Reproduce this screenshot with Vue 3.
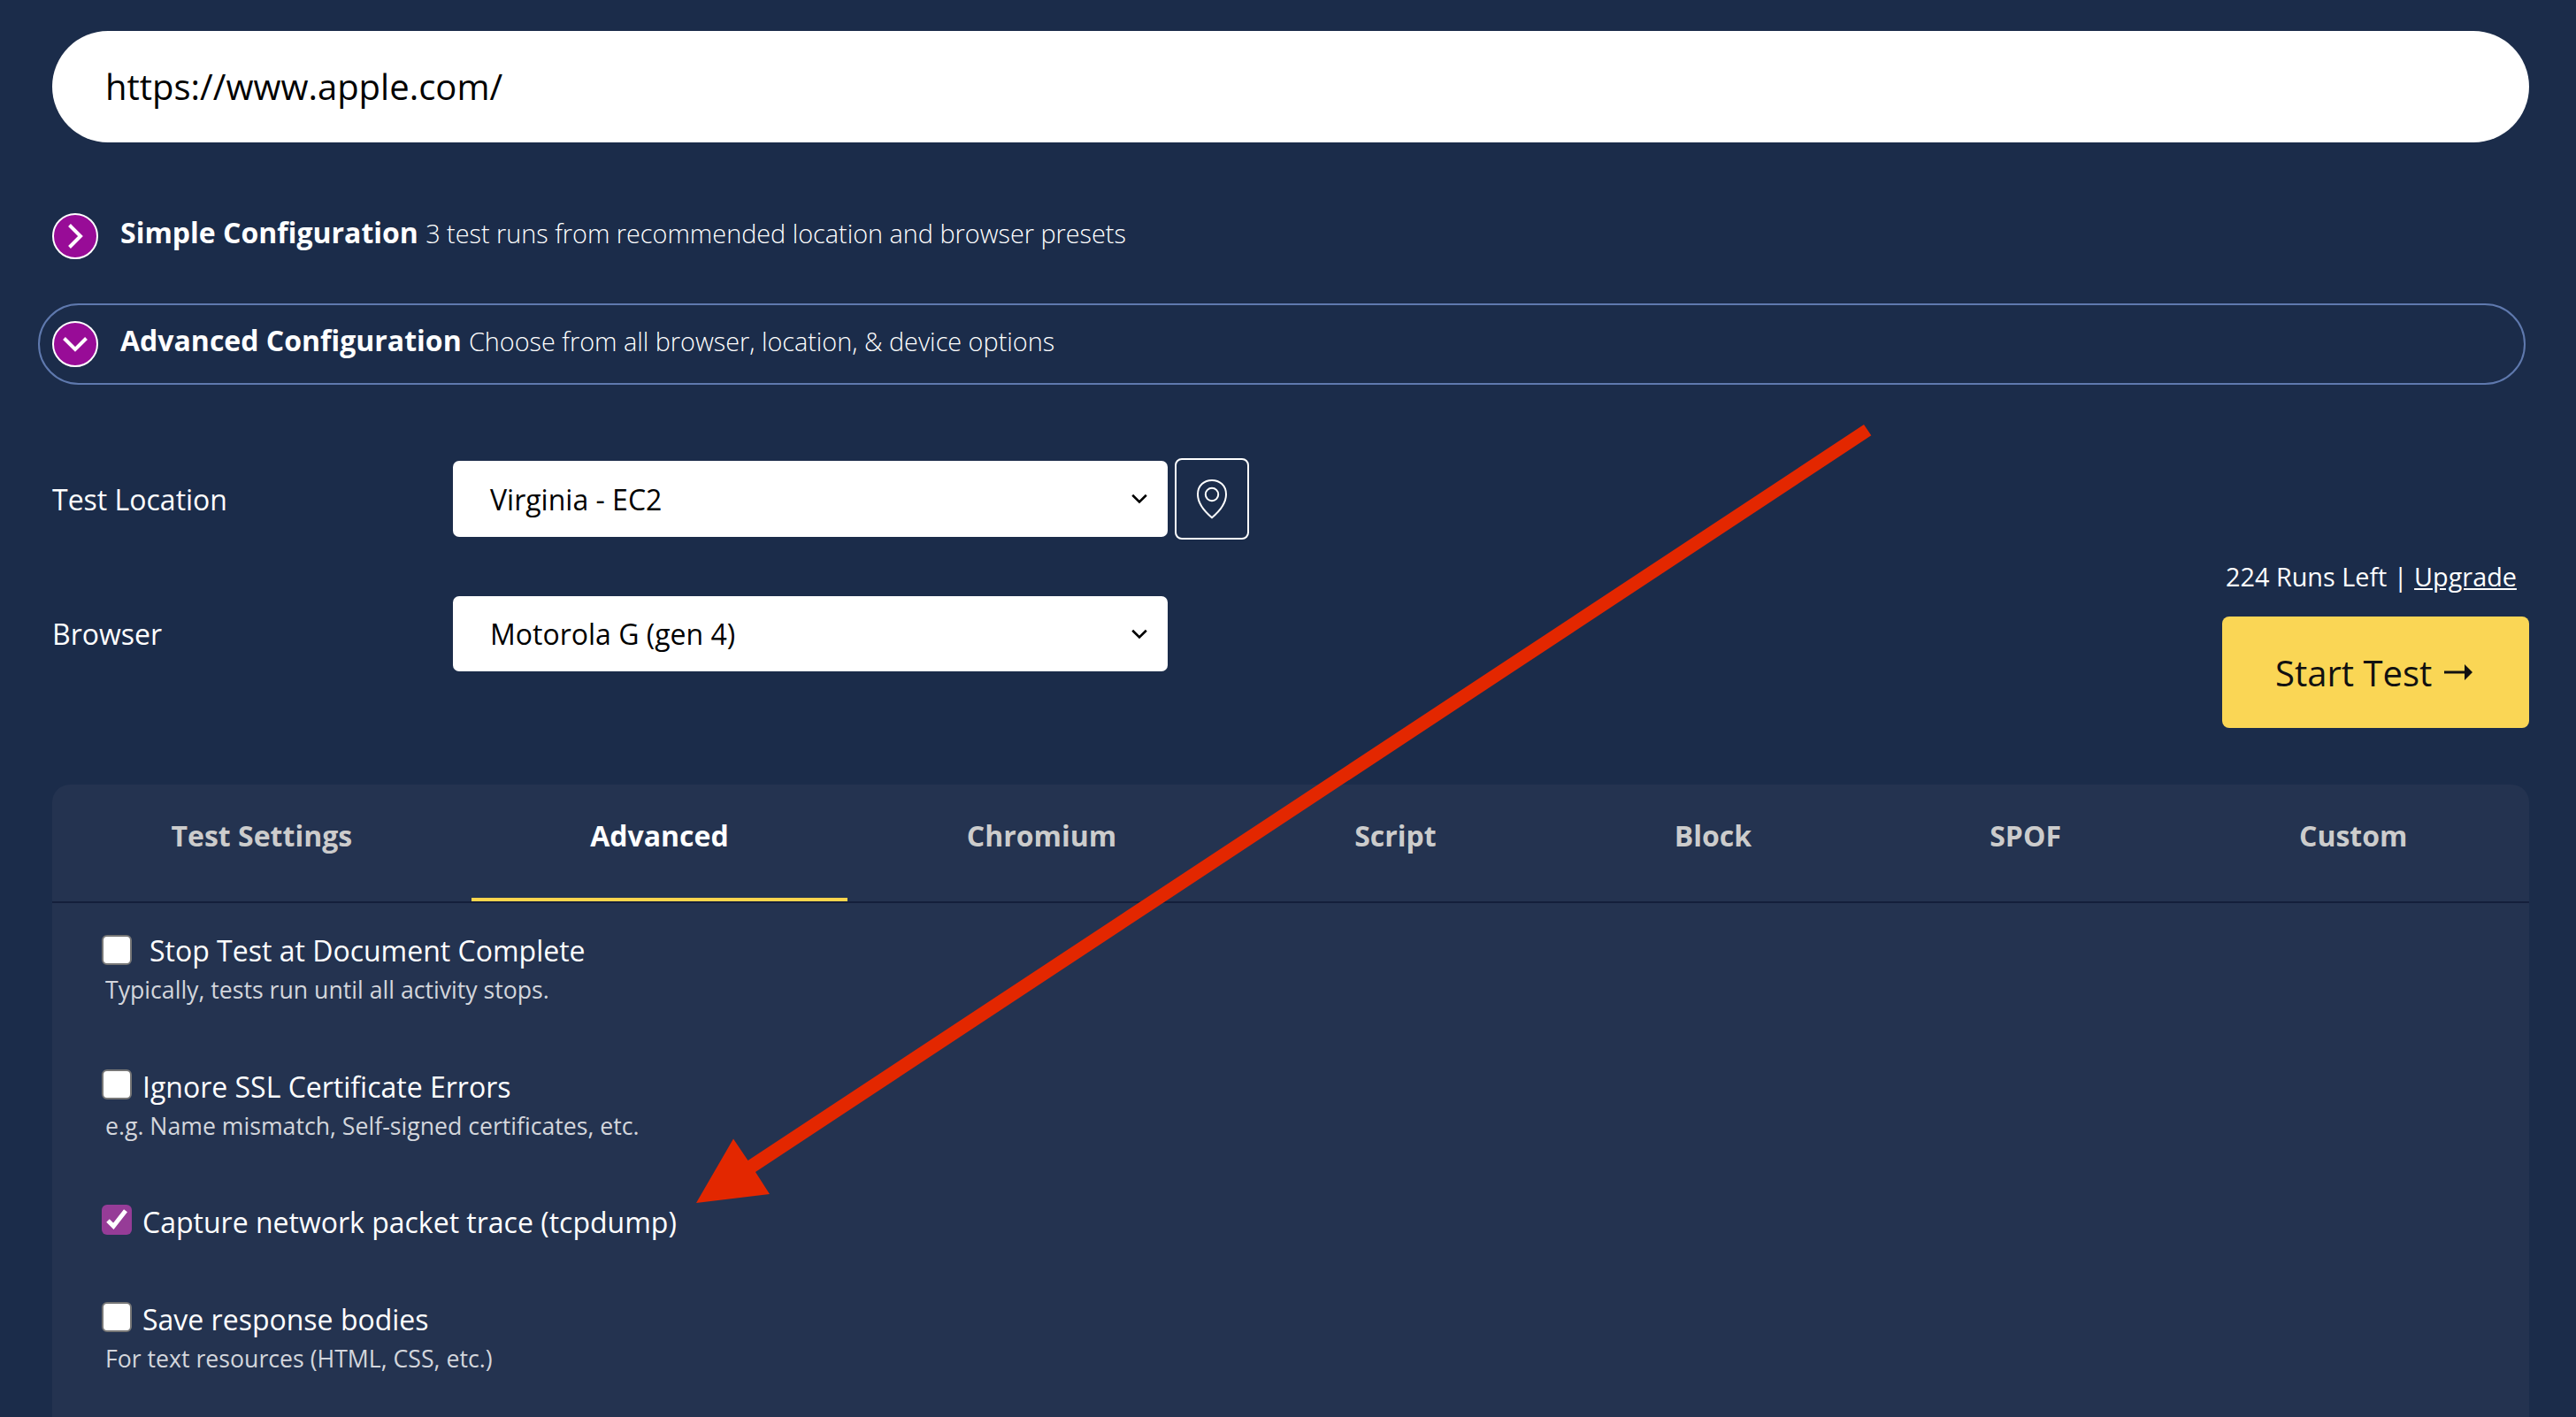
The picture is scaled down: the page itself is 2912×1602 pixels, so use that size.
<script setup>
import { ref } from 'vue'

const url = ref('https://www.apple.com/')

const fields = [
  { label: 'Test Location', value: 'Virginia - EC2', map: true },
  { label: 'Browser', value: 'Motorola G (gen 4)', map: false }
]

const tabs = ['Test Settings', 'Advanced', 'Chromium', 'Script', 'Block', 'SPOF', 'Custom']
const activeTab = ref('Advanced')

const options = ref([
  { label: 'Stop Test at Document Complete', hint: 'Typically, tests run until all activity stops.', checked: false, wide: true },
  { label: 'Ignore SSL Certificate Errors', hint: 'e.g. Name mismatch, Self-signed certificates, etc.', checked: false },
  { label: 'Capture network packet trace (tcpdump)', hint: '', checked: true },
  { label: 'Save response bodies', hint: 'For text resources (HTML, CSS, etc.)', checked: false }
])
</script>

<template>
  <main class="page">
    <div class="url-field">{{ url }}</div>

    <div class="config">
      <svg class="config-icon" viewBox="0 0 52 52">
        <circle cx="26" cy="26" r="25" />
        <path d="M19.5 13.5 32 26 19.5 38.5" />
      </svg>
      <p class="config-text">
        <strong>Simple Configuration</strong>
        <span class="config-note">3 test runs from recommended location and browser presets</span>
      </p>
    </div>
    <div class="config open">
      <svg class="config-icon" viewBox="0 0 52 52">
        <circle cx="26" cy="26" r="25" />
        <path d="M13.5 19.5 26 32 38.5 19.5" />
      </svg>
      <p class="config-text">
        <strong>Advanced Configuration</strong>
        <span class="config-note">Choose from all browser, location, &amp; device options</span>
      </p>
    </div>

    <section class="setup">
      <div class="fields">
        <div v-for="field in fields" :key="field.label" class="field">
          <label class="field-label">{{ field.label }}</label>
          <div class="select">
            <span>{{ field.value }}</span>
            <svg class="select-arrow" viewBox="0 0 18 12">
              <path d="M1.2 1.8 9 9.4 16.8 1.8" />
            </svg>
          </div>
          <button v-if="field.map" class="map-btn">
            <svg viewBox="0 0 36 46">
              <path d="M18 44.2C10 37.5 2 28.5 2 18 2 7.5 9.5 2 18 2s16 5.500 16 16c0 10.500-8 19.500-16 26.200z" />
              <circle cx="18" cy="18" r="7.2" />
            </svg>
          </button>
        </div>
      </div>
      <div class="submit">
        <p class="runs">224 Runs Left | <a class="upgrade">Upgrade</a></p>
        <button class="start-btn">
          <span>Start Test</span>
          <svg class="start-arrow" viewBox="0 0 32 18">
            <path d="M0 7.500h23V0l9 9-9 9v-7.500H0z" />
          </svg>
        </button>
      </div>
    </section>

    <section class="panel">
      <nav class="tabs">
        <a
          v-for="tab in tabs"
          :key="tab"
          class="tab"
          :class="{ active: tab === activeTab }"
          @click="activeTab = tab"
        >{{ tab }}</a>
      </nav>
      <ul class="options">
        <li v-for="option in options" :key="option.label" class="option" :class="{ wide: option.wide }">
          <div class="option-row" @click="option.checked = !option.checked">
            <span class="checkbox" :class="{ checked: option.checked }">
              <svg v-if="option.checked" viewBox="0 0 34 34">
                <path d="M7 18 13.300 24.300 27 6.800" />
              </svg>
            </span>
            <span class="option-label">{{ option.label }}</span>
          </div>
          <p v-if="option.hint" class="option-hint">{{ option.hint }}</p>
        </li>
      </ul>
    </section>

    <svg class="pointer" viewBox="0 0 2912 1602">
      <path d="M787 1360 829 1287.500 845.500 1312 2107 480 2115.300 492.300 854 1325 870 1350z" />
    </svg>
  </main>
</template>

<style>
body {
  margin: 0;
  background: #1b2c4a;
}
</style>

<style scoped>
.page {
  position: relative;
  box-sizing: border-box;
  height: 1602px;
  padding: 35px 53px 0 59px;
  overflow: hidden;
  background: #1b2c4a;
  color: #fff;
  font-family: "Open Sans", "Noto Sans", sans-serif;
  font-size: 32px;
}

p,
ul {
  margin: 0;
  padding: 0;
}

button {
  font-family: inherit;
}

.url-field {
  box-sizing: border-box;
  height: 126px;
  padding: 0 60px;
  border-radius: 63px;
  background: #fff;
  color: #000;
  font-size: 40px;
  line-height: 126px;
}

.config {
  box-sizing: border-box;
  display: flex;
  align-items: center;
  gap: 25px;
  height: 92px;
  margin: 60px 4px 0 -16px;
  padding: 0 14px;
  border: 2px solid transparent;
  border-radius: 46px;
}

.config.open {
  margin-top: 30px;
  border-color: #5f79ae;
}

.config-icon {
  flex: none;
  width: 52px;
  height: 52px;
}

.config-icon circle {
  fill: #980c97;
  stroke: #fff;
  stroke-width: 2;
}

.config-icon path {
  fill: none;
  stroke: #fff;
  stroke-width: 4;
}

.config-text {
  padding-bottom: 7px;
  line-height: 44px;
  white-space: nowrap;
}

.config-text strong {
  font-weight: 700;
}

.config-note {
  margin-left: 8.3px;
  font-size: 28.8px;
  font-weight: 300;
}

.setup {
  display: flex;
  justify-content: space-between;
  align-items: flex-end;
  height: 305px;
  margin-top: 83px;
}

.fields {
  align-self: flex-start;
}

.field {
  display: flex;
  align-items: center;
  height: 92px;
}

.field + .field {
  margin-top: 60.5px;
}

.field-label {
  width: 453px;
}

.select {
  box-sizing: border-box;
  display: flex;
  justify-content: space-between;
  align-items: center;
  width: 808px;
  height: 85.5px;
  padding: 0 23px 0 42px;
  border-radius: 7px;
  background: #fff;
  color: #000;
}

.select-arrow {
  width: 18px;
  height: 12px;
}

.select-arrow path {
  fill: none;
  stroke: #000;
  stroke-width: 2.6;
}

.map-btn {
  box-sizing: border-box;
  display: flex;
  align-items: center;
  justify-content: center;
  width: 84px;
  height: 92px;
  margin-left: 8px;
  padding: 0;
  border: 2px solid #fff;
  border-radius: 8px;
  background: none;
}

.map-btn svg {
  width: 36px;
  height: 46px;
  fill: none;
  stroke: #fff;
  stroke-width: 2;
}

.submit {
  width: 347px;
}

.runs {
  padding: 0 0 25px 4px;
  font-size: 28.8px;
  line-height: 40px;
  white-space: nowrap;
}

.upgrade {
  text-decoration: underline;
}

.start-btn {
  display: flex;
  align-items: center;
  gap: 14px;
  width: 347px;
  height: 126px;
  padding: 0 0 0 60px;
  border: 0;
  border-radius: 8px;
  background: #fad655;
  color: #111;
  font-size: 40px;
}

.start-arrow {
  width: 32px;
  height: 18px;
  fill: #111;
}

.panel {
  height: 760px;
  margin-top: 64px;
  border-radius: 20px 20px 0 0;
  background: #243350;
}

.tabs {
  display: flex;
  height: 132px;
  padding-right: 3px;
  border-bottom: 2px solid #141f3b;
}

.tab {
  box-sizing: border-box;
  flex: 1 1 auto;
  padding-top: 36px;
  border-bottom: 4px solid transparent;
  color: #ccc;
  font-weight: 700;
  line-height: 44px;
  text-align: center;
}

.tab.active {
  border-bottom-color: #fed54d;
  color: #fff;
}

.options {
  display: flex;
  flex-direction: column;
  gap: 65.5px;
  padding: 32px 56px;
  list-style: none;
}

.option-row {
  display: flex;
  gap: 12px;
  height: 44px;
  line-height: 44px;
}

.option.wide .option-row {
  gap: 20px;
}

.checkbox {
  box-sizing: border-box;
  width: 34px;
  height: 34px;
  margin-top: 2px;
  border: 2px solid #767676;
  border-radius: 6px;
  background: #fff;
}

.option.wide .checkbox {
  margin-top: 4px;
}

.checkbox.checked {
  border: 0;
  background: #963c97;
}

.checkbox svg {
  display: block;
  fill: none;
  stroke: #fff;
  stroke-width: 5;
}

.option-hint {
  padding-left: 4px;
  color: #d3d6dc;
  font-size: 26.67px;
  line-height: 44px;
}

.pointer {
  position: absolute;
  top: 0;
  left: 0;
  width: 2912px;
  height: 1602px;
  fill: #e32700;
  pointer-events: none;
}
</style>
